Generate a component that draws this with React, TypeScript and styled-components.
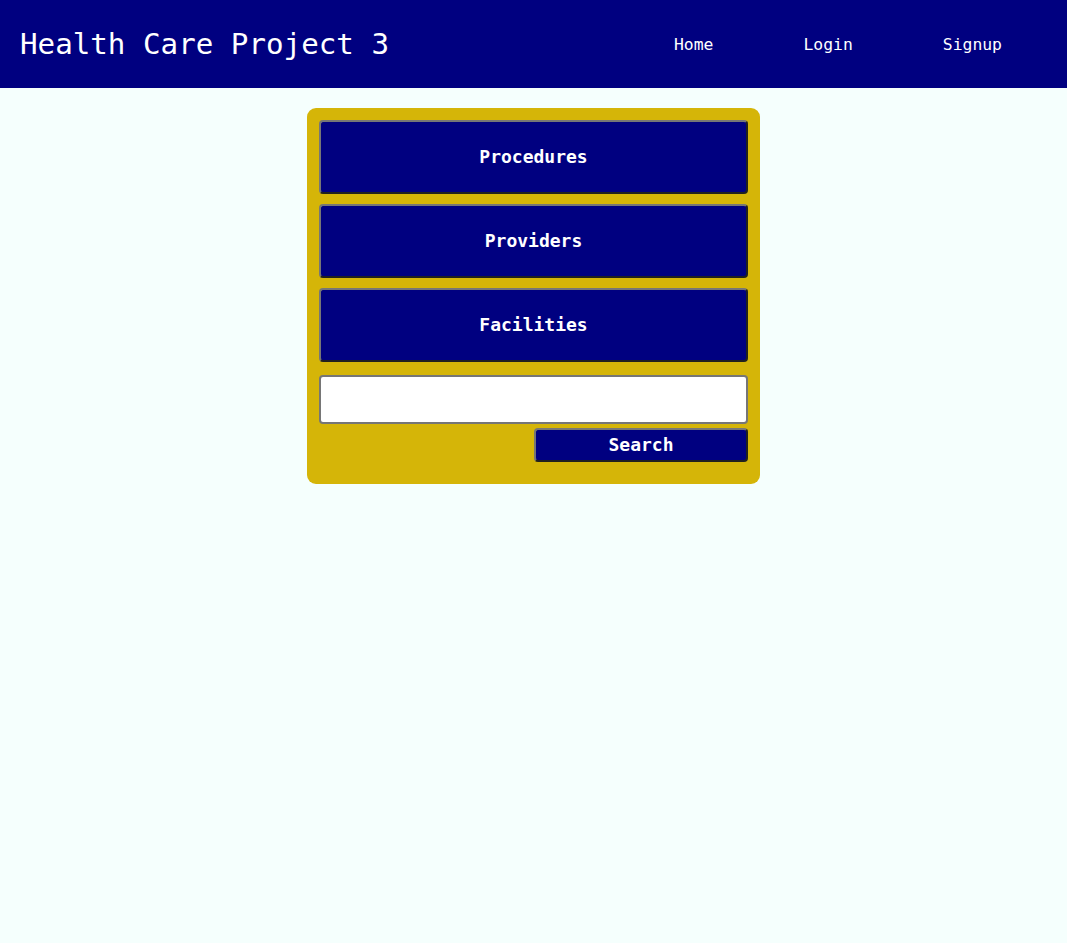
import React from "react";
import styled, { createGlobalStyle } from "styled-components";

const Global = createGlobalStyle`
  html, body {
    margin: 0;
    padding: 0;
    background: #f5fffd;
    font-family: "DejaVu Sans Mono", "Liberation Mono", monospace;
  }
  #root { min-height: 943px; background: #f5fffd; }
`;

const Header = styled.header`
  height: 88px;
  background: #000080;
  display: flex;
  align-items: center;
  justify-content: space-between;
  padding: 0 65px 0 20px;
  box-sizing: border-box;
`;

const Title = styled.h1`
  margin: 0;
  color: #ffffff;
  font-weight: normal;
  font-size: 29.2px;
  line-height: 1;
  padding-top: 2px;
`;

const Nav = styled.nav`
  display: flex;
  gap: 90px;
`;

const NavLink = styled.a`
  color: #ffffff;
  text-decoration: none;
  font-size: 16.4px;
  cursor: pointer;
`;

const Main = styled.main`
  display: flex;
  justify-content: center;
  padding-top: 20px;
`;

const Panel = styled.div`
  width: 453px;
  box-sizing: border-box;
  background: #d5b508;
  border-radius: 9px;
  padding: 12px 12px 22px;
  display: flex;
  flex-direction: column;
`;

const CategoryList = styled.div`
  display: flex;
  flex-direction: column;
  gap: 10px;
  margin-bottom: 13px;
`;

const NavyButton = styled.button<{ $h: number }>`
  height: ${(p) => p.$h}px;
  background: #000080;
  color: #ffffff;
  font-family: "DejaVu Sans Mono", "Liberation Mono", monospace;
  font-size: 18px;
  font-weight: bold;
  border: 2px solid;
  border-color: #767676 #202020 #202020 #767676;
  border-radius: 4px;
  cursor: pointer;
  padding: 0 0 2px;
`;

const CategoryButton = styled(NavyButton)`
  width: 100%;
`;

const SearchInput = styled.input`
  height: 49px;
  box-sizing: border-box;
  width: 100%;
  background: #ffffff;
  border: 2px solid #767676;
  border-radius: 4px;
  font-size: 18px;
  padding: 0 8px;
  margin: 0;
`;

const SearchRow = styled.div`
  display: flex;
  justify-content: flex-end;
  margin-top: 4px;
`;

const SearchButton = styled(NavyButton)`
  width: 214px;
`;

export default function App() {
  return (
    <>
      <Global />
      <Header>
        <Title>Health Care Project 3</Title>
        <Nav>
          <NavLink>Home</NavLink>
          <NavLink>Login</NavLink>
          <NavLink>Signup</NavLink>
        </Nav>
      </Header>
      <Main>
        <Panel>
          <CategoryList>
            <CategoryButton $h={74}>Procedures</CategoryButton>
            <CategoryButton $h={74}>Providers</CategoryButton>
            <CategoryButton $h={74}>Facilities</CategoryButton>
          </CategoryList>
          <SearchInput type="text" />
          <SearchRow>
            <SearchButton $h={34}>Search</SearchButton>
          </SearchRow>
        </Panel>
      </Main>
    </>
  );
}
